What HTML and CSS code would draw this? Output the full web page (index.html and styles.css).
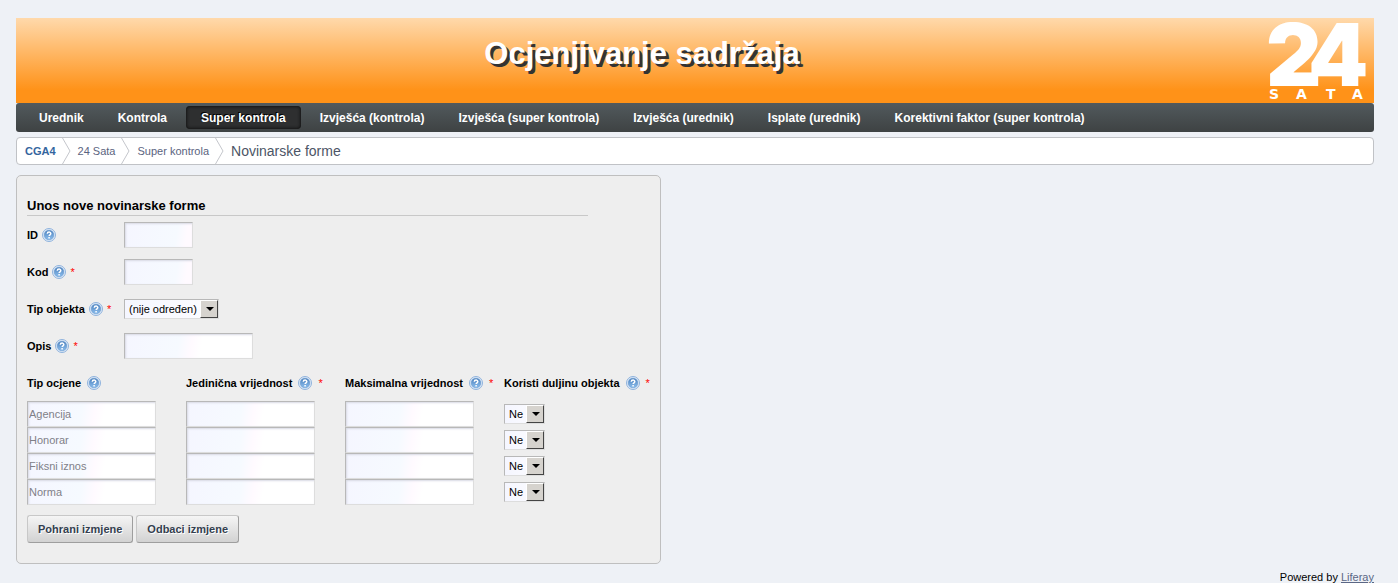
FILE: index.html
```html
<!DOCTYPE html>
<html lang="hr">
<head>
<meta charset="utf-8">
<title>Novinarske forme</title>
<link rel="stylesheet" href="styles.css">
</head>
<body>
<svg class="defs" aria-hidden="true">
  <defs>
    <linearGradient id="ball" x1="0" y1="0" x2="0" y2="1">
      <stop offset="0" stop-color="#4a80bd"/>
      <stop offset="1" stop-color="#8fc0ee"/>
    </linearGradient>
    <symbol id="help" viewBox="0 0 14 14">
      <circle cx="7" cy="7" r="6.5" fill="#dfeaf7" stroke="#8fb2dc"/>
      <circle cx="7" cy="7" r="4.8" fill="url(#ball)" stroke="#5f90c8" stroke-width=".5"/>
      <path d="M5.3 5.7C5.3 3.6 8.8 3.6 8.8 5.6C8.8 6.8 7.1 6.8 7.1 8.1M7.1 9.1V10.4" fill="none" stroke="#fff" stroke-width="1.5"/>
    </symbol>
  </defs>
</svg>

<header class="banner">
  <h1 class="title">Ocjenjivanje sadržaja</h1>
  <svg class="logo" viewBox="0 0 102 80" role="img" aria-label="24 sata">
    <text class="logo-number" x="-2 40" y="64">24</text>
    <text class="logo-word" x="1 28 58 84" y="77">SATA</text>
  </svg>
</header>

<nav class="nav">
  <a href="#">Urednik</a>
  <a href="#">Kontrola</a>
  <a href="#" class="current">Super kontrola</a>
  <a href="#">Izvješća (kontrola)</a>
  <a href="#">Izvješća (super kontrola)</a>
  <a href="#">Izvješća (urednik)</a>
  <a href="#">Isplate (urednik)</a>
  <a href="#">Korektivni faktor (super kontrola)</a>
</nav>

<nav class="crumbs">
  <a href="#" class="home">CGA4</a>
  <svg class="chevron" viewBox="0 0 9 26" aria-hidden="true"><path d="M0.5 0L8 13L0.5 26"/></svg>
  <a href="#">24 Sata</a>
  <svg class="chevron" viewBox="0 0 9 26" aria-hidden="true"><path d="M0.5 0L8 13L0.5 26"/></svg>
  <a href="#">Super kontrola</a>
  <svg class="chevron" viewBox="0 0 9 26" aria-hidden="true"><path d="M0.5 0L8 13L0.5 26"/></svg>
  <span class="here">Novinarske forme</span>
</nav>

<main class="panel">
  <form>
    <h2 class="heading">Unos nove novinarske forme</h2>
    <div class="row">
      <label class="label" for="id">ID <svg class="help"><use href="#help"/></svg></label>
      <input class="box short" id="id" type="text">
    </div>
    <div class="row">
      <label class="label" for="kod">Kod <svg class="help"><use href="#help"/></svg><span class="req">*</span></label>
      <input class="box short" id="kod" type="text">
    </div>
    <div class="row">
      <label class="label" for="tip">Tip objekta <svg class="help"><use href="#help"/></svg><span class="req">*</span></label>
      <span class="pick wide"><select id="tip"><option>(nije određen)</option></select></span>
    </div>
    <div class="row">
      <label class="label" for="opis">Opis <svg class="help"><use href="#help"/></svg><span class="req">*</span></label>
      <input class="box" id="opis" type="text">
    </div>
    <table class="rates">
      <thead>
        <tr>
          <th><span class="label">Tip ocjene <svg class="help"><use href="#help"/></svg></span></th>
          <th><span class="label">Jedinična vrijednost <svg class="help"><use href="#help"/></svg><span class="req">*</span></span></th>
          <th><span class="label">Maksimalna vrijednost <svg class="help"><use href="#help"/></svg><span class="req">*</span></span></th>
          <th><span class="label">Koristi duljinu objekta <svg class="help"><use href="#help"/></svg><span class="req">*</span></span></th>
        </tr>
      </thead>
      <tbody>
        <tr>
          <td><input class="box" type="text" value="Agencija" aria-label="Tip ocjene" disabled></td>
          <td><input class="box" type="text" aria-label="Jedinična vrijednost"></td>
          <td><input class="box" type="text" aria-label="Maksimalna vrijednost"></td>
          <td><span class="pick"><select aria-label="Koristi duljinu objekta"><option>Ne</option><option>Da</option></select></span></td>
        </tr>
        <tr>
          <td><input class="box" type="text" value="Honorar" aria-label="Tip ocjene" disabled></td>
          <td><input class="box" type="text" aria-label="Jedinična vrijednost"></td>
          <td><input class="box" type="text" aria-label="Maksimalna vrijednost"></td>
          <td><span class="pick"><select aria-label="Koristi duljinu objekta"><option>Ne</option><option>Da</option></select></span></td>
        </tr>
        <tr>
          <td><input class="box" type="text" value="Fiksni iznos" aria-label="Tip ocjene" disabled></td>
          <td><input class="box" type="text" aria-label="Jedinična vrijednost"></td>
          <td><input class="box" type="text" aria-label="Maksimalna vrijednost"></td>
          <td><span class="pick"><select aria-label="Koristi duljinu objekta"><option>Ne</option><option>Da</option></select></span></td>
        </tr>
        <tr>
          <td><input class="box" type="text" value="Norma" aria-label="Tip ocjene" disabled></td>
          <td><input class="box" type="text" aria-label="Jedinična vrijednost"></td>
          <td><input class="box" type="text" aria-label="Maksimalna vrijednost"></td>
          <td><span class="pick"><select aria-label="Koristi duljinu objekta"><option>Ne</option><option>Da</option></select></span></td>
        </tr>
      </tbody>
    </table>
    <div class="actions">
      <button type="button" class="button">Pohrani izmjene</button>
      <button type="button" class="button">Odbaci izmjene</button>
    </div>
  </form>
</main>

<footer class="footer">Powered by <a href="#">Liferay</a></footer>
</body>
</html>
```
FILE: styles.css
```css
* { box-sizing: border-box; }

body {
  margin: 0;
  padding: 18px 24px 0 16px;
  background: #eef1f6;
  color: #000;
  font: 11px/14px "Liberation Sans", Arial, sans-serif;
}

a { color: inherit; text-decoration: none; }

.defs { display: block; width: 0; height: 0; }

.banner {
  display: grid;
  grid-template-columns: 1fr auto;
  height: 85px;
  padding: 4px 4px 0 0;
  background: linear-gradient(#ffd9ab, #ff9218 85%);
}
.title {
  margin: 0;
  padding-top: 12px;
  justify-self: center;
  color: #fff;
  font-size: 31px;
  line-height: 40px;
  text-shadow: 3px 3px 0 #333;
  white-space: nowrap;
}
.logo { width: 102px; height: 80px; overflow: visible; fill: #fff; }
.logo-number { font: 900 86px Inter, sans-serif; }
.logo-word { font: bold 14px "DejaVu Sans", sans-serif; }

.nav {
  display: flex;
  gap: 4px;
  align-items: center;
  height: 29px;
  padding: 0 8px;
  border-radius: 3px;
  background: linear-gradient(#525a5d, #3e4243);
  color: #fff;
  font-weight: bold;
  font-size: 12px;
}
.nav a {
  height: 23px;
  padding: 1px 15px 0;
  line-height: 22px;
  border-radius: 4px;
  white-space: nowrap;
}
.nav .current {
  background: #2e2f30;
  box-shadow: inset 0 0 3px 1px #151515;
  text-shadow: -1px -1px 0 #000;
}

.crumbs {
  display: flex;
  align-items: center;
  height: 28px;
  margin-top: 5px;
  padding-left: 8px;
  border: 1px solid #c0c2c6;
  border-radius: 4px;
  background: #fff;
  color: #5b6480;
}
.crumbs .home { color: #34659e; font-weight: bold; }
.chevron {
  width: 9px;
  height: 26px;
  margin: 0 7px 0 6px;
  fill: none;
  stroke: #c4c6cc;
}
.here { color: #4c5566; font-size: 14px; }

.panel {
  width: 645px;
  max-width: 100%;
  margin-top: 10px;
  padding: 21px 10px 20px;
  border: 1px solid #bfbfbf;
  border-radius: 5px;
  background: #eee;
}
.heading {
  width: 561px;
  max-width: 100%;
  margin: 0;
  padding-bottom: 1px;
  border-bottom: 1px solid #c8c8c8;
  font-size: 13px;
  line-height: 17px;
}

.row { display: flex; align-items: center; height: 37px; }
.label {
  display: flex;
  align-items: center;
  gap: 4px;
  font-weight: bold;
  white-space: nowrap;
}
.row .label { width: 97px; }
.help { flex: none; width: 14px; height: 14px; }
.req { color: #f00; font-weight: normal; }

.box {
  display: block;
  width: 129px;
  height: 26px;
  padding: 0 1px;
  border: 1px solid #ddd;
  border-top: 1px solid #b8b8b8;
  border-left-color: #b8b8b8;
  background: linear-gradient(100deg, #f5f6ff, #f6faff 42%, #fffaff 52%, #fff 60%) #fff;
  box-shadow: inset 1px 1px 2px #d8dae4;
  color: #000;
  font: inherit;
}
.box.short {
  width: 69px;
  background: linear-gradient(100deg, #f5f6ff, #f6faff 75%, #fffaff 90%);
}
.box:disabled { color: #808088; }

.pick { display: block; position: relative; width: 41px; height: 20px; }
.pick.wide { width: 95px; }
.pick select {
  appearance: none;
  display: block;
  width: 100%;
  height: 100%;
  padding: 0 17px 0 4px;
  border: 1px solid #ddd;
  border-top-color: #b8b8b8;
  border-left-color: #b8b8b8;
  border-radius: 0;
  background: linear-gradient(90deg, #f5f6ff, #fdfdff);
  color: #000;
  font: inherit;
}
.pick::before {
  content: "";
  position: absolute;
  top: 1px;
  right: 1px;
  bottom: 1px;
  width: 16px;
  border: 1px solid #fff;
  border-right-color: #444;
  border-bottom-color: #444;
  background: #d6d3ce;
  pointer-events: none;
}
.pick::after {
  content: "";
  position: absolute;
  top: 8px;
  right: 5px;
  border: 4px solid transparent;
  border-top-color: #000;
  border-bottom: 0;
  pointer-events: none;
}

.rates { width: 623px; border-collapse: collapse; table-layout: fixed; }
.rates th, .rates td { width: 159px; padding: 0; text-align: left; }
.rates th:last-child, .rates td:last-child { width: 146px; }
.rates th { height: 37px; }
.rates .label { gap: 6px; }

.actions { display: flex; gap: 3px; margin-top: 10px; }
.button {
  height: 28px;
  padding: 0 10px;
  border: 1px solid #c8c8c8;
  border-right-color: #9e9e9e;
  border-bottom-color: #9e9e9e;
  border-radius: 3px;
  background: linear-gradient(#f5f5f5, #d2d2d2);
  color: #34404f;
  font: bold 11px "Liberation Sans", Arial, sans-serif;
  text-shadow: 1px 1px 0 #fff;
}

.footer { margin-top: 6px; text-align: right; }
.footer a { color: #5b6785; text-decoration: underline; }
```
